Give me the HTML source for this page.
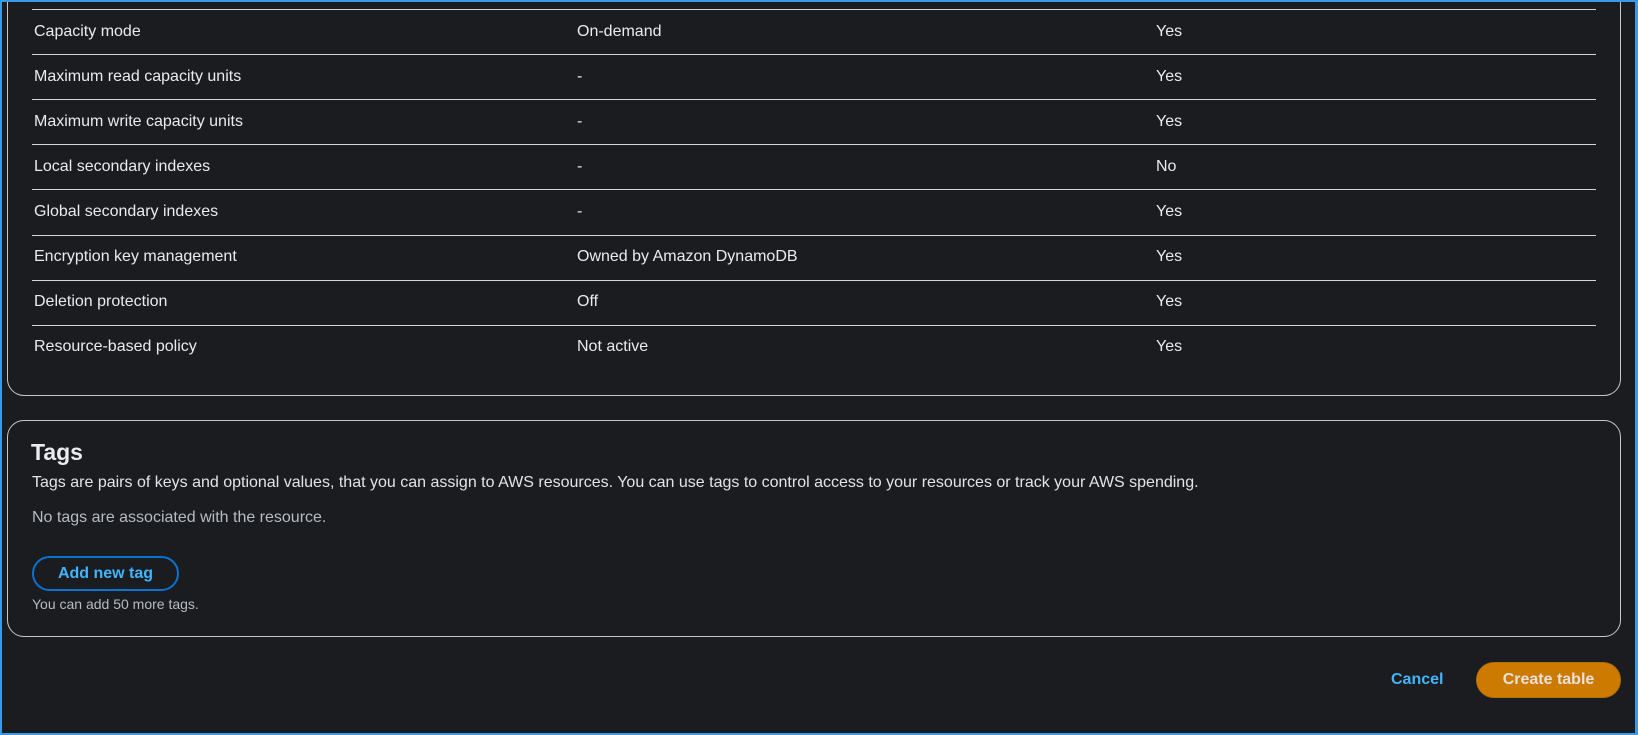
<!DOCTYPE html>
<html><head><style>
*{margin:0;padding:0;box-sizing:border-box}
html,body{width:1638px;height:735px;overflow:hidden;background:#1b1c1f;font-family:"Liberation Sans",sans-serif;color:#e6e6e9}
.frame{position:absolute;left:0;top:0;width:1638px;height:735px;border:2px solid #3b9ae6;border-right-width:3px}
.card{position:absolute;left:7px;width:1614px;border:1px solid #c6c6cd;border-radius:17px}
.c1{top:-20px;height:416px;border-top:none}
.c2{top:420px;height:217px}
.line{position:absolute;left:32px;width:1564px;height:1px;background:#d5d5da}
.cell{position:absolute;font-size:16px;line-height:18px;color:#e9ebed}
h2{position:absolute;left:31px;top:439px;font-size:23px;font-weight:bold;color:#e9ebed}
.t{position:absolute;left:32px;font-size:16px;line-height:18px}
.btn{position:absolute;left:32px;top:556px;width:147px;height:35px;border:2px solid #0972d3;border-radius:18px;color:#42b4ff;font-weight:bold;font-size:16px;text-align:center;line-height:31px}
.cancel{position:absolute;left:1391px;top:671px;color:#42b4ff;font-weight:bold;font-size:16px}
.create{position:absolute;left:1476px;top:662px;width:145px;height:36px;border-radius:18px;background:#cc7a00;border:1px solid #b86e00;color:#e6e2db;font-weight:bold;font-size:16px;text-align:center;line-height:34px}
</style></head><body>
<div class="card c1"></div>
<div class="card c2"></div>
<div class="line" style="top:9px"></div>
<div class="line" style="top:54px"></div>
<div class="line" style="top:99px"></div>
<div class="line" style="top:144px"></div>
<div class="line" style="top:189px"></div>
<div class="line" style="top:235px"></div>
<div class="line" style="top:280px"></div>
<div class="line" style="top:325px"></div>

<div class="cell" style="left:34px;top:23px">Capacity mode</div><div class="cell" style="left:577px;top:23px">On-demand</div><div class="cell" style="left:1156px;top:23px">Yes</div>
<div class="cell" style="left:34px;top:68px">Maximum read capacity units</div><div class="cell" style="left:577px;top:68px">-</div><div class="cell" style="left:1156px;top:68px">Yes</div>
<div class="cell" style="left:34px;top:113px">Maximum write capacity units</div><div class="cell" style="left:577px;top:113px">-</div><div class="cell" style="left:1156px;top:113px">Yes</div>
<div class="cell" style="left:34px;top:158px">Local secondary indexes</div><div class="cell" style="left:577px;top:158px">-</div><div class="cell" style="left:1156px;top:158px">No</div>
<div class="cell" style="left:34px;top:203px">Global secondary indexes</div><div class="cell" style="left:577px;top:203px">-</div><div class="cell" style="left:1156px;top:203px">Yes</div>
<div class="cell" style="left:34px;top:248px">Encryption key management</div><div class="cell" style="left:577px;top:248px">Owned by Amazon DynamoDB</div><div class="cell" style="left:1156px;top:248px">Yes</div>
<div class="cell" style="left:34px;top:293px">Deletion protection</div><div class="cell" style="left:577px;top:293px">Off</div><div class="cell" style="left:1156px;top:293px">Yes</div>
<div class="cell" style="left:34px;top:338px">Resource-based policy</div><div class="cell" style="left:577px;top:338px">Not active</div><div class="cell" style="left:1156px;top:338px">Yes</div>

<h2>Tags</h2>
<div class="t" style="top:474px;color:#e3e4e6">Tags are pairs of keys and optional values, that you can assign to AWS resources. You can use tags to control access to your resources or track your AWS spending.</div>
<div class="t" style="top:509px;color:#b6bcc3">No tags are associated with the resource.</div>
<div class="btn">Add new tag</div>
<div class="t" style="top:596px;font-size:14px;line-height:16px;color:#b6bcc3">You can add 50 more tags.</div>
<div class="cancel">Cancel</div>
<div class="create">Create table</div>
<div class="frame"></div>
</body></html>
